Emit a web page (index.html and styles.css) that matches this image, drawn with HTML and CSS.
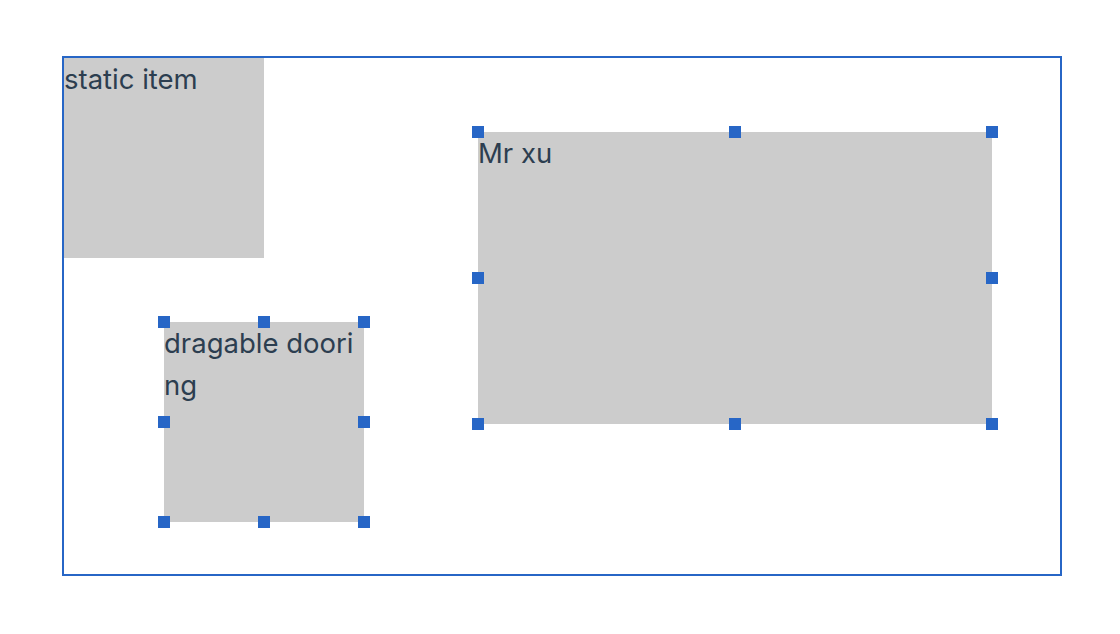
FILE: index.html
```html
<!DOCTYPE html>
<html lang="en">
	<head>
		<meta charset="utf-8" />
		<title>drag demo</title>
		<link rel="stylesheet" href="styles.css">
	</head>
	<body>
		<div class="page">
			<div class="canvas">
				<div class="item static-item">static item</div>

				<div class="item active" style="left: 100px; top: 264px; width: 200px; height: 200px;">
					dragable dooring
					<span class="dot tl"></span><span class="dot tm"></span><span class="dot tr"></span>
					<span class="dot ml"></span><span class="dot mr"></span>
					<span class="dot bl"></span><span class="dot bm"></span><span class="dot br"></span>
				</div>

				<div class="item active" style="left: 414px; top: 74px; width: 514px; height: 292px;">
					Mr xu
					<span class="dot tl"></span><span class="dot tm"></span><span class="dot tr"></span>
					<span class="dot ml"></span><span class="dot mr"></span>
					<span class="dot bl"></span><span class="dot bm"></span><span class="dot br"></span>
				</div>
			</div>
		</div>
	</body>
</html>
```

FILE: styles.css
```css
body {
  margin: 0;
  background: #fff;
  font-family: Inter, "Noto Sans", sans-serif;
  color: #2c3e50;
}
.page {
  padding: 56px 0 0 62px;
}
.canvas {
  position: relative;
  width: 996px;
  height: 516px;
  border: 2px solid #2766c6;
}
.item {
  position: absolute;
  box-sizing: border-box;
  background: #cccccc;
  font-size: 27.5px;
  line-height: 42px;
  word-break: break-all;
}
.static-item {
  left: 0;
  top: 0;
  width: 200px;
  height: 200px;
}
.dot {
  position: absolute;
  width: 12px;
  height: 12px;
  margin: -6px 0 0 -6px;
  background: #2766c6;
}
.tl { left: 0; top: 0; }
.tm { left: 50%; top: 0; }
.tr { left: 100%; top: 0; }
.ml { left: 0; top: 50%; }
.mr { left: 100%; top: 50%; }
.bl { left: 0; top: 100%; }
.bm { left: 50%; top: 100%; }
.br { left: 100%; top: 100%; }
```
